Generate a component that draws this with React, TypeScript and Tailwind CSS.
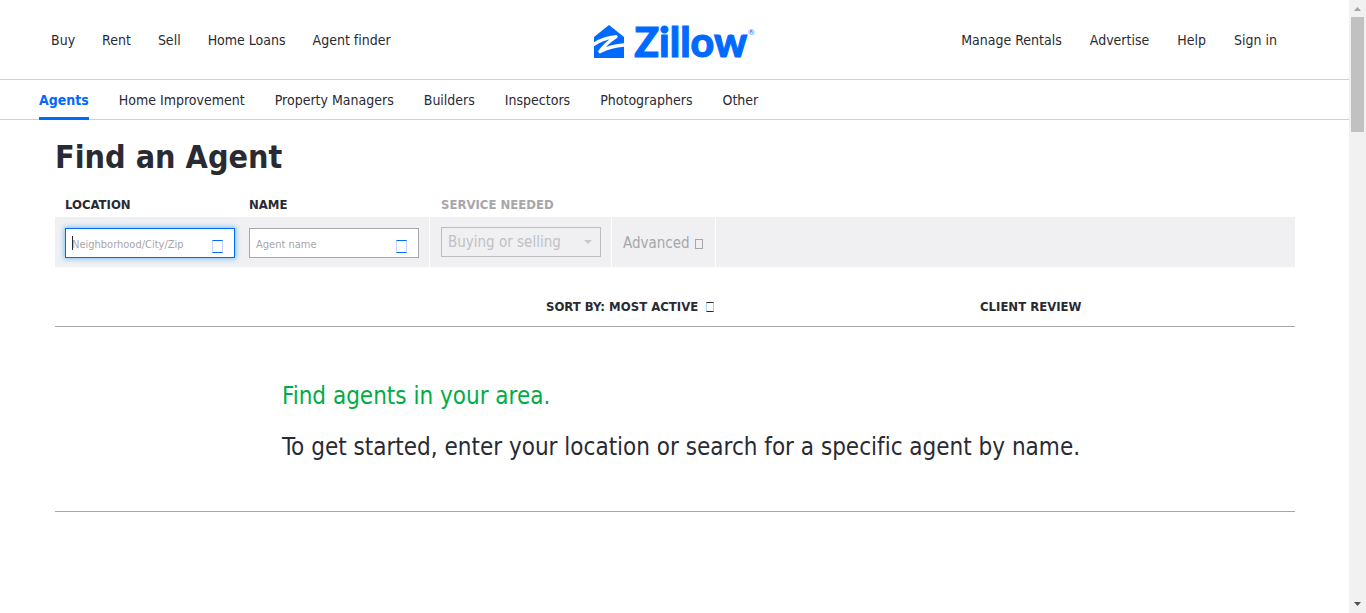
import React from "react";

const mainLinks = ["Buy", "Rent", "Sell", "Home Loans", "Agent finder"];
const accountLinks = ["Manage Rentals", "Advertise", "Help", "Sign in"];
const directoryLinks = [
  "Home Improvement",
  "Property Managers",
  "Builders",
  "Inspectors",
  "Photographers",
  "Other",
];

function Logo() {
  return (
    <a href="#" aria-label="Zillow" className="flex items-center gap-[10px] pt-1 text-[#006aff]">
      <svg width="30" height="33" viewBox="0 0 30 33" aria-hidden="true">
        <path d="M0 12 15 0l15 12v21H0z" fill="currentColor" />
        <path
          d="M-1 20C5 15.500 13 12.500 22 11.600 15.500 16 10 20.500 6 26.500 14 22.500 22 20.400 31 20"
          fill="none"
          stroke="#fff"
          strokeWidth="3.400"
          strokeLinejoin="round"
        />
      </svg>
      <span className="flex [font-family:Lato,sans-serif] text-[41px] leading-9 font-black">
        <span className="[-webkit-text-stroke:1px_#006aff]">Zillow</span>
        <span className="pl-px text-[8px] leading-4 font-normal">®</span>
      </span>
    </a>
  );
}

function Field({ id, label, placeholder, active = false }: { id: string; label: string; placeholder: string; active?: boolean }) {
  return (
    <div>
      <label htmlFor={id} className="block h-6 px-[10px] text-[13px] leading-6 font-bold">
        {label}
      </label>
      <div className={active ? "h-[50px] bg-[#f0f0f2] pt-[11px] pr-1 pl-[10px]" : "h-[50px] bg-[#f0f0f2] px-[10px] pt-[11px]"}>
        <div className="relative">
          <input
            id={id}
            type="text"
            placeholder={placeholder}
            className={
              active
                ? "block h-[30px] w-[170px] border border-[#006aff] bg-white px-[6px] pt-[2px] text-[11px] shadow-[0_0_5px_1px_#7ec2f5] outline-none placeholder:text-[#a7a6ab]"
                : "block h-[30px] w-[170px] border border-[#a7a6ab] bg-white px-[6px] pt-[2px] text-[11px] outline-none placeholder:text-[#a7a6ab]"
            }
          />
          {active && <span className="absolute top-2 left-[7px] h-[14px] w-px bg-[#2a2a33]" />}
          <button
            type="submit"
            aria-label={"Search by " + label.toLowerCase()}
            className="absolute top-3 right-3 h-[13px] w-[11px] border border-x-[#c4d2ff] border-y-[#006aff]"
          />
        </div>
      </div>
    </div>
  );
}

export default function App() {
  return (
    <div className="flex min-h-screen bg-white [font-family:DejaVu_Sans_Condensed,DejaVu_Sans,sans-serif] text-sm text-[#2a2a33] [font-variant-ligatures:none]">
      <div className="min-w-0 flex-1">
        <header className="grid h-20 grid-cols-[1fr_auto_1fr] items-center border-b border-[#d1d1d5] px-[51px]">
          <nav aria-label="Main" className="flex gap-[27px]">
            {mainLinks.map((text) => (
              <a key={text} href="#">{text}</a>
            ))}
          </nav>
          <Logo />
          <nav aria-label="Account" className="flex justify-end gap-7 pr-[21px]">
            {accountLinks.map((text) => (
              <a key={text} href="#">{text}</a>
            ))}
          </nav>
        </header>
        <nav aria-label="Directory" className="flex h-10 gap-[30px] border-b border-[#d1d1d5] pl-[39px] leading-10">
          <a href="#" className="h-10 border-b-3 border-[#006aff] font-bold text-[#006aff]">Agents</a>
          {directoryLinks.map((text) => (
            <a key={text} href="#">{text}</a>
          ))}
        </nav>

        <main className="pr-[54px] pl-[55px]">
          <h1 className="pt-[17px] text-[32px] leading-10 font-bold">Find an Agent</h1>
          <form className="mt-4 flex items-end gap-px" onSubmit={(e) => e.preventDefault()}>
            <div className="flex">
              <Field id="location" label="LOCATION" placeholder="Neighborhood/City/Zip" active />
              <Field id="name" label="NAME" placeholder="Agent name" />
            </div>
            <div>
              <label htmlFor="service" className="block h-6 px-[11px] text-[13px] leading-6 font-bold text-[#a7a6ab]">
                SERVICE NEEDED
              </label>
              <div className="h-[50px] bg-[#f0f0f2] pt-[10px] pr-[10px] pl-[11px]">
                <div className="relative">
                  <select
                    id="service"
                    disabled
                    className="block h-[30px] w-40 appearance-none border border-[#bdbdc0] px-[6px] pt-[2px] text-[15px] text-[#c0c0c4] opacity-100"
                  >
                    <option>Buying or selling</option>
                  </select>
                  <svg className="absolute top-[13px] right-[9px]" width="8" height="4" viewBox="0 0 8 4" aria-hidden="true">
                    <path d="M0 0h8L4 4z" fill="#c8c8cc" />
                  </svg>
                </div>
              </div>
            </div>
            <button type="button" className="flex h-[50px] w-[103px] items-center gap-[5px] bg-[#f0f0f2] pt-1 pl-[11px] text-[15px] text-[#a7a6ab]">
              Advanced
              <span className="h-[10px] w-2 border border-[#a7a6ab]" />
            </button>
            <div className="h-[50px] flex-1 bg-[#f0f0f2]" />
          </form>

          <div className="flex h-[60px] items-center border-b border-[#a7a6ab] pt-[21px] text-[13px] font-bold">
            <div className="w-[491px]" />
            <button type="button" className="flex w-[434px] items-center gap-2">
              SORT BY: MOST ACTIVE
              <span className="h-[10px] w-2 border border-x-[#9fd8f5] border-y-[#2a2a33]" />
            </button>
            <h2>CLIENT REVIEW</h2>
          </div>

          <section className="flex h-[185px] flex-col gap-[19px] border-b border-[#a7a6ab] pt-[53px] pl-[227px] text-2xl">
            <h2 className="text-[#00ad44]">Find agents in your area.</h2>
            <p>To get started, enter your location or search for a specific agent by name.</p>
          </section>
        </main>
      </div>

      <div className="flex w-[17px] flex-col items-center justify-between bg-[#f1f1f1]" aria-hidden="true">
        <div>
          <svg width="17" height="17" viewBox="0 0 17 17">
            <path d="M5 11h7L8.500 7z" fill="#a3a3a3" />
          </svg>
          <div className="mx-auto h-[115px] w-[13px] bg-[#c1c1c1]" />
        </div>
        <svg width="17" height="17" viewBox="0 0 17 17">
          <path d="M5 6h7L8.500 10z" fill="#505050" />
        </svg>
      </div>
    </div>
  );
}
